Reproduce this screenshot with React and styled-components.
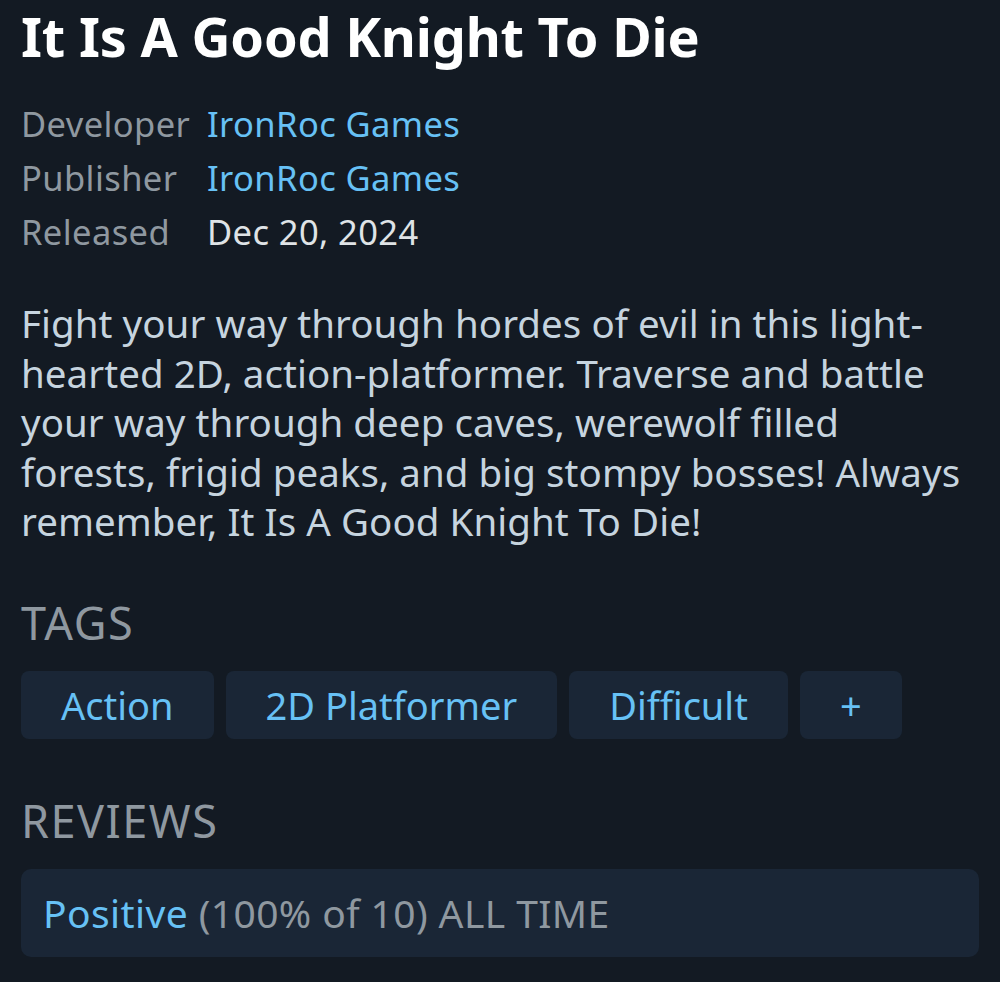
import React from "react";
import styled, { createGlobalStyle } from "styled-components";

const GlobalStyle = createGlobalStyle`
  html, body {
    margin: 0;
    padding: 0;
    background: #131a23;
  }
  body {
    font-family: "Noto Sans", "Open Sans", sans-serif;
  }
`;

const Page = styled.div`
  width: 1000px;
  height: 982px;
  box-sizing: border-box;
  padding: 0 21px;
  background: #131a23;
  overflow: hidden;
`;

const Title = styled.h1`
  margin: 0;
  font-size: 54px;
  line-height: 72px;
  font-weight: 700;
  letter-spacing: -0.2px;
  color: #ffffff;
`;

const Meta = styled.div`
  display: grid;
  grid-template-columns: 186px 1fr;
  grid-auto-rows: 54px;
  align-items: center;
  margin-top: 24px;
  font-size: 34.5px;
  letter-spacing: 0.4px;
`;

const Label = styled.span`
  color: #8f98a0;
`;

const Value = styled.span`
  color: ${(p) => (p.link ? "#67c1f5" : "#dfe3e6")};
`;

const Description = styled.p`
  margin: 41px 0 0 0;
  font-size: 38.5px;
  line-height: 49.6px;
  letter-spacing: 0.05px;
  white-space: nowrap;
  color: #c6d4df;
`;

const SectionHeading = styled.h2`
  margin: ${(p) => p.top}px 0 0 0;
  font-size: 45px;
  line-height: 50px;
  font-weight: 400;
  letter-spacing: 1.5px;
  color: #8f98a0;
`;

const Tags = styled.div`
  display: flex;
  gap: 12px;
  margin-top: 23px;
`;

const Tag = styled.div`
  height: 68px;
  box-sizing: border-box;
  padding: 0 40px;
  display: flex;
  align-items: center;
  justify-content: center;
  min-width: ${(p) => (p.plus ? "99px" : "0")};
  background: #1a2636;
  border-radius: 8px;
  color: #67c1f5;
  font-size: 38px;
`;

const ReviewBox = styled.div`
  margin-top: 23px;
  width: 958px;
  height: 88px;
  box-sizing: border-box;
  padding-left: 22px;
  display: flex;
  align-items: center;
  background: #1a2636;
  border-radius: 10px;
  font-size: 39px;
  letter-spacing: 0.4px;
  white-space: pre;
  color: #8f98a0;
`;

const Positive = styled.span`
  color: #67c1f5;
`;

const lines = [
  "Fight your way through hordes of evil in this light-",
  "hearted 2D, action-platformer. Traverse and battle",
  "your way through deep caves, werewolf filled",
  "forests, frigid peaks, and big stompy bosses! Always",
  "remember, It Is A Good Knight To Die!",
];

const App = () => (
  <>
    <GlobalStyle />
    <Page>
      <Title>It Is A Good Knight To Die</Title>
      <Meta>
        <Label>Developer</Label>
        <Value link>IronRoc Games</Value>
        <Label>Publisher</Label>
        <Value link>IronRoc Games</Value>
        <Label>Released</Label>
        <Value>Dec 20, 2024</Value>
      </Meta>
      <Description>
        {lines.map((l, i) => (
          <React.Fragment key={i}>
            {l}
            {i < lines.length - 1 && <br />}
          </React.Fragment>
        ))}
      </Description>
      <SectionHeading top={51}>TAGS</SectionHeading>
      <Tags>
        <Tag>Action</Tag>
        <Tag>2D Platformer</Tag>
        <Tag>Difficult</Tag>
        <Tag plus>+</Tag>
      </Tags>
      <SectionHeading top={57}>REVIEWS</SectionHeading>
      <ReviewBox>
        <Positive>Positive</Positive> (100% of 10) ALL TIME
      </ReviewBox>
    </Page>
  </>
);

export default App;
